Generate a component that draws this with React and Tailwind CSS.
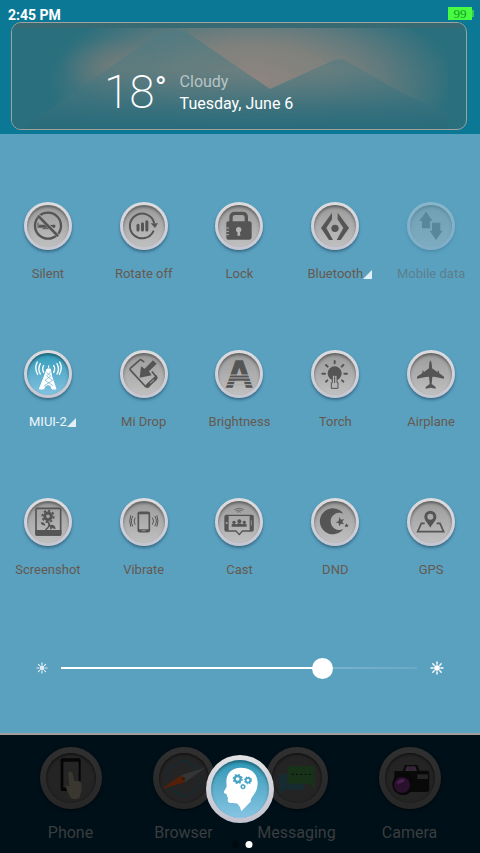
import React, { useState } from "react";

const FONT = "font-['Roboto','Noto_Sans',sans-serif]";
const INK = "#555555";

const line = (width, color = INK) => ({
  fill: "none",
  stroke: color,
  strokeWidth: width,
  strokeLinecap: "round",
  strokeLinejoin: "round",
});

/* Glyphs are drawn on a grid three times finer than the 48px tile. */

const Silent = () => (
  <svg viewBox="73 37 144 144" className="size-full" aria-hidden="true">
    <path d="M117 105h26l16 1a5 5 0 1 1 0 7l-16 1h-26z" fill={INK} />
    <path d="M115 100v14M130 117h22" {...line(3)} />
    <circle cx="145" cy="108" r="39" {...line(7)} />
    <path d="M118 80l55 56" {...line(11, "#a9a9a9")} />
    <path d="M117 80l56 57" {...line(8)} />
  </svg>
);

const Rotate = () => (
  <svg viewBox="361 37 144 144" className="size-full" aria-hidden="true">
    <path d="M463 98a37 37 0 1 0-2 27" {...line(6)} />
    <path d="M453 101h22l-9 14z" fill={INK} />
    <path d="M415 107v14M428.500 102v19M441.500 96v25" {...line(9)} />
  </svg>
);

const Lock = () => (
  <svg viewBox="77 37 144 144" className="size-full" aria-hidden="true">
    <path d="M125 95v-12q0-12 12-12h22q12 0 12 12v12" {...line(10)} />
    <path d="M117 95h63q7 0 7 7v41q0 7-7 7h-63q-6 0-6-6v-43q0-6 6-6z" fill={INK} />
    <path d="M106 115h12M106 125h12M106 135h12" {...line(3, "#aaaaaa")} />
    <circle cx="148" cy="120" r="8" fill="#b4b4b4" />
    <path d="M145 122h6l2 16h-9z" fill="#b4b4b4" />
  </svg>
);

const Bluetooth = () => (
  <svg viewBox="364 37 144 144" className="size-full" aria-hidden="true">
    <path d="M427 69v20l-17 26 20 36h-12l-24-36zM444 69v20l17 26-20 36h12l25-36z" fill={INK} />
    <circle cx="436" cy="116" r="11" fill={INK} />
  </svg>
);

const Data = () => (
  <svg viewBox="652 37 144 144" className="size-full" aria-hidden="true">
    <path d="M709 66l20 28h-8v22h-24v-22h-8zM727 99h25v24h7l-20 28-19-28h7z" fill={INK} />
  </svg>
);

const Tower = () => (
  <svg viewBox="73 37 144 144" className="size-full" aria-hidden="true">
    <path d="M147 83v9M142 94h10l4 22 13 38h-12q-3-14-13-13t-12 13h-13l15-38z" fill="white" stroke="white" strokeWidth="3" />
    <path d="M141 105l12 10-17 13 24 16M153 103l-12 12 18 13-25 16" {...line(2, "#5caed0")} />
    <path d="M132 84q-6 9 0 20M122 78q-9 16 0 31M113 73q-10 18 1 37M162 84q6 9 0 20M172 78q9 16 0 31M180 73q10 18-1 37" {...line(4, "white")} />
  </svg>
);

const Drop = () => (
  <svg viewBox="361 37 144 144" className="size-full" aria-hidden="true">
    <path d="M432 72l-7-5q-3-2-6 1l-25 22q-5 4-1 8l43 47q4 5 9 1l24-21q4-4 1-7l-12-15" {...line(5)} />
    <path d="M438 141l32-29 4 7-27 31q-4 2-9-3z" fill={INK} />
    <path d="M452 136l10-9" {...line(3, "#b5b5b5")} />
    <path d="M460 68l11 10-23 23 8 12-36 7 4-34 11 7z" fill={INK} />
  </svg>
);

const Brightness = () => (
  <svg viewBox="77 37 144 144" className="size-full" aria-hidden="true">
    <text x="150" y="149" textAnchor="middle" fontSize="112" fontWeight="700" fontFamily="Liberation Sans, Arial, sans-serif" fill={INK} stroke={INK} strokeWidth="4">A</text>
    <path d="M104 112h92M104 121h92M104 131h92M104 141h92" {...line(3, "#b0b0b0")} />
  </svg>
);

const Torch = () => (
  <svg viewBox="364 37 144 144" className="size-full" aria-hidden="true">
    <circle cx="435" cy="107" r="21" fill={INK} />
    <path d="M435 70v7M409 82l5 5M398 108h8M409 132l4-4M461 82l-5 5M464 108h8M461 132l-4-4" {...line(6)} />
    <path d="M428 113h14v22h3v17h-20v-17h3z" fill="#b5b5b5" stroke={INK} strokeWidth="3" />
    <path d="M435 117v18" {...line(3)} />
  </svg>
);

const Airplane = () => (
  <svg viewBox="652 37 144 144" className="size-full" aria-hidden="true">
    <path d="M722 68q5 5 5 24l17 12v-5h4v7l15 11v6l-25-5-10-1-2 22 12 9v5l-15-3-15 3v-5l12-9-2-22-10 1-26 5v-6l16-11v-7h4v5l16-12q0-19 4-24z" fill={INK} />
  </svg>
);

const Screenshot = () => (
  <svg viewBox="73 37 144 144" className="size-full" aria-hidden="true">
    <rect x="109" y="68" width="74" height="80" rx="4" {...line(5)} />
    <path d="M107 133h78v13q0 4-4 4h-70q-4 0-4-4z" fill={INK} />
    <circle cx="145" cy="92" r="10" {...line(9)} />
    <circle cx="145" cy="92" r="17" {...line(6)} strokeDasharray="7 6" strokeLinecap="butt" />
    <path d="M147 110q5 12-8 21M149 119q6 2 5 10" {...line(5)} />
    <path d="M123 110q12-2 14 10-12 0-14-10zM151 118q15-3 17 12-13 0-17-12z" fill={INK} />
  </svg>
);

const Vibrate = () => (
  <svg viewBox="361 37 144 144" className="size-full" aria-hidden="true">
    <rect x="416" y="80" width="33" height="58" rx="5" {...line(5)} />
    <path d="M417 83h31M417 134h31" {...line(6)} />
    <path d="M427 135h10" {...line(2, "#b0b0b0")} />
    <path d="M406 97q-6 9 0 19M399 92q-9 14 0 29M393 90q-6 15 0 32M459 97q6 9 0 19M466 92q9 14 0 29M472 90q6 15 0 32" {...line(3)} />
  </svg>
);

const Cast = () => (
  <svg viewBox="77 37 144 144" className="size-full" aria-hidden="true">
    <path d="M111 89h76q4 0 4 4v39q0 4-4 4h-28l-9 11-10-11h-29q-4 0-4-4v-39q0-4 4-4z" {...line(4)} />
    <path d="M107 89h11v46h-11zM181 89h11v46h-11z" fill={INK} />
    <circle cx="112" cy="112" r="3" fill="#aaaaaa" />
    <path d="M186 105v14" {...line(2, "#aaaaaa")} />
    <circle cx="134" cy="110" r="5" fill={INK} />
    <circle cx="150" cy="107" r="6" fill={INK} />
    <circle cx="165" cy="110" r="5" fill={INK} />
    <path d="M127 123v-7q7-4 14 0 9-7 18 0 7-4 13 0v7z" fill={INK} />
    <path d="M136 71q13-8 26 0M140 75q9-5 18 0M144 79q5-3 9 0" {...line(2)} />
  </svg>
);

const Moon = () => (
  <svg viewBox="364 37 144 144" className="size-full" aria-hidden="true">
    <path d="M461 84A39 39 0 1 0 461 130A26 26 0 1 1 461 84z" fill={INK} />
    <path d="M449 94l5 8 9-2-5 8 5 8-9-2-5 8-2-9-9-3 9-4zM471 113l2 4 4 1-3 3v4l-4-2-4 1 1-4-2-3h4z" fill={INK} />
  </svg>
);

const Gps = () => (
  <svg viewBox="652 37 144 144" className="size-full" aria-hidden="true">
    <path d="M722 75a18 18 0 0 1 18 18c0 12-11 19-18 33-7-14-18-21-18-33a18 18 0 0 1 18-18zm0 9a9 9 0 1 0 0 18 9 9 0 0 0 0-18z" fill={INK} fillRule="evenodd" />
    <path d="M705 113h-10l-11 25h78l-11-25h-10" {...line(5)} strokeLinecap="butt" strokeLinejoin="miter" />
  </svg>
);

const TILES = [
  { label: "Silent", Icon: Silent },
  { label: "Rotate off", Icon: Rotate },
  { label: "Lock", Icon: Lock },
  { label: "Bluetooth", Icon: Bluetooth, more: true },
  { label: "Mobile data", Icon: Data, disabled: true },
  { label: "MIUI-2", Icon: Tower, more: true, on: true },
  { label: "Mi Drop", Icon: Drop },
  { label: "Brightness", Icon: Brightness },
  { label: "Torch", Icon: Torch },
  { label: "Airplane", Icon: Airplane },
  { label: "Screenshot", Icon: Screenshot },
  { label: "Vibrate", Icon: Vibrate },
  { label: "Cast", Icon: Cast },
  { label: "DND", Icon: Moon },
  { label: "GPS", Icon: Gps },
];

function Tile({ label, Icon, on, more, disabled }) {
  const face = on
    ? "bg-linear-to-b from-[#2d9dbb] to-[#82c1e0]"
    : "bg-linear-to-b from-[#9b9b9b] to-[#c0c0c0]";
  return (
    <button type="button" disabled={disabled} className="flex flex-col items-center">
      <span className={`grid size-12 rounded-full bg-linear-to-b from-[#dddddf] to-[#c6c6d2] shadow-[0_2px_3px_rgba(20,50,70,0.5)] ${disabled ? "opacity-35" : ""}`}>
        <span className={`col-start-1 row-start-1 m-[3px] rounded-full shadow-[inset_0_2px_3px_rgba(0,0,0,0.4)] ${face}`} />
        <span className="col-start-1 row-start-1">
          <Icon />
        </span>
      </span>
      <span className={`mt-[14px] flex items-center text-[13px] leading-5 whitespace-nowrap ${on ? "text-[#eef6fa]" : disabled ? "text-[#5c7f8d]" : "text-[#65594f]"}`}>
        {label}
        {more && (
          <span className="w-0">
            <svg viewBox="0 0 9 9" className="size-[9px] max-w-none" aria-hidden="true">
              <path d="M9 0v9H0z" fill="#e2eff5" />
            </svg>
          </span>
        )}
      </span>
    </button>
  );
}

const Sun = ({ className }) => (
  <svg viewBox="0 0 40 40" className={className} aria-hidden="true">
    <circle cx="20" cy="20" r="8" fill="white" />
    <path d="M20 3v6M20 31v6M3 20h6M31 20h6M8 8l4 4M28 28l4 4M8 32l4-4M28 12l4-4" {...line(4, "white")} />
  </svg>
);

const PhoneArt = () => (
  <svg viewBox="119 64 186 186" className="size-full" aria-hidden="true">
    <rect x="181" y="98" width="60" height="98" rx="5" fill="#050505" />
    <rect x="189" y="108" width="46" height="78" fill="#252525" />
    <path d="M204 140q6-6 12 1l6 25 18 1q5 9 3 30l-6 20q-13 6-26 0l-12-25q-4-13 0-14l8 5z" fill="#39372f" />
  </svg>
);

const BrowserArt = () => (
  <svg viewBox="457 64 186 186" className="size-full" aria-hidden="true">
    <circle cx="550" cy="158" r="50" fill="none" stroke="#152b32" strokeWidth="5" strokeDasharray="60 18" />
    <path d="M550 96l-10 14h20zM550 218l-10-12h20z" fill="#152b32" />
    <path d="M482 191l60-43 11 22z" fill="#561f08" />
    <path d="M542 148l75-23-64 45z" fill="#333536" />
    <circle cx="548" cy="159" r="5" fill="#3c190b" />
  </svg>
);

const MessagingArt = () => (
  <svg viewBox="77 64 186 186" className="size-full" aria-hidden="true">
    <path d="M116 145h76v47h-58l-17 17z" fill="#162c31" />
    <path d="M142 121h81v70l-14-17h-67z" fill="#18321a" />
    <path d="M154 146h58" stroke="#0c100c" strokeWidth="4" strokeDasharray="6 7" />
  </svg>
);

const CameraArt = () => (
  <svg viewBox="415 64 186 186" className="size-full" aria-hidden="true">
    <path d="M462 136h25l5-18h38l7 17h22q7 0 7 7v48q0 9-9 9h-86q-10 0-10-10v-45q0-8 1-8z" fill="#090909" />
    <path d="M498 122h26l5 14h-36z" fill="#2d2d2d" />
    <path d="M505 124h11v9h-11z" fill="#43154a" />
    <path d="M530 146h32v14h-32z" fill="#252525" />
    <circle cx="487" cy="176" r="32" fill="#080808" />
    <circle cx="484" cy="178" r="24" fill="#29102c" />
    <path d="M467 174a18 18 0 0 1 26-12q-4 12-26 12z" fill="#472050" />
  </svg>
);

const DOCK = [
  { label: "Phone", Art: PhoneArt },
  { label: "Browser", Art: BrowserArt },
  { label: "Messaging", Art: MessagingArt },
  { label: "Camera", Art: CameraArt },
];

const Gear = ({ x, y, r }) => (
  <g transform={`translate(${x} ${y})`}>
    <circle r={r} {...line(r * 0.8, "#4aa5c4")} />
    <circle r={r * 1.45} fill="none" stroke="#4aa5c4" strokeWidth={r * 0.5} strokeDasharray={`${r * 0.57} ${r * 0.57}`} />
  </g>
);

const MindArt = () => (
  <svg viewBox="0 0 204 204" className="size-full" aria-hidden="true">
    <path d="M104 38c32 0 51 19 51 47 0 22-11 33-19 45q-3 5-1 9l-29 30q-3-15-11-23-6-3-20-2-10 0-10-9l1-7-3-4-1-6q-9-3-9-7l9-16q0-6-1-14c0-27 17-43 43-43z" fill="white" />
    <Gear x={95} y={72} r={9} />
    <Gear x={126} y={76} r={7} />
    <Gear x={111} y={95} r={5} />
  </svg>
);

export default function App() {
  const [level, setLevel] = useState(75);
  return (
    <main className={`flex min-h-screen w-full flex-col bg-[#5aa1c0] ${FONT}`}>
      <header className="bg-[#0b7896] pb-1">
        <div className="flex h-[22px] items-center justify-between pt-1 pr-[6px] pl-2">
          <time className="pt-1 text-sm leading-4 font-bold text-white">2:45 PM</time>
          <div className="flex items-center" aria-label="Battery 99 percent">
            <span className="flex h-[13px] w-6 items-center justify-center bg-[#47fa42] font-['Liberation_Serif',serif] text-[13px] leading-[13px] text-[#159a20]">99</span>
            <span className="h-[7px] w-[2px] bg-[#31c954]" />
          </div>
        </div>
        <section className="mr-[13px] ml-[11px] grid h-[108px] overflow-hidden rounded-[10px] border border-[#a3a19b] bg-[#296f7d]" aria-label="Weather">
          <svg viewBox="0 0 454 106" preserveAspectRatio="none" className="col-start-1 row-start-1 h-[106px] w-full" aria-hidden="true">
            <defs>
              <radialGradient id="glow" gradientUnits="userSpaceOnUse" cx="0" cy="0" r="1" gradientTransform="translate(240 58) scale(205 90)">
                <stop offset="0" stopColor="#8e8580" />
                <stop offset="0.4" stopColor="#7f817d" />
                <stop offset="0.65" stopColor="#607a7d" />
                <stop offset="1" stopColor="#296f7d" />
              </radialGradient>
              <radialGradient id="dawn" gradientUnits="userSpaceOnUse" cx="0" cy="0" r="1" gradientTransform="translate(102 44) scale(52 30)">
                <stop offset="0" stopColor="#8a7f78" stopOpacity="0.5" />
                <stop offset="1" stopColor="#8a7f78" stopOpacity="0" />
              </radialGradient>
              <linearGradient id="peak" gradientUnits="userSpaceOnUse" x1="0" y1="8" x2="0" y2="106">
                <stop offset="0" stopColor="#4d7b82" stopOpacity="0.7" />
                <stop offset="0.4" stopColor="#4f7a80" stopOpacity="0.55" />
                <stop offset="0.8" stopColor="#336f7c" stopOpacity="0.9" />
                <stop offset="1" stopColor="#286c7c" />
              </linearGradient>
            </defs>
            <rect y="5" width="436" height="101" fill="url(#glow)" />
            <rect y="5" width="200" height="80" fill="url(#dawn)" />
            <path d="M20 98L148 10q10-4 25-2L258 66l64-29q6-2 12 1l60 34 42 17v17H10z" fill="url(#peak)" />
            <rect width="454" height="5" fill="#386a73" />
          </svg>
          <div className="z-10 col-start-1 row-start-1 flex items-start pt-[46px] pl-[92px] text-white">
            <span className="text-[46px] leading-[46px] font-extralight">18</span>
            <span className="text-[32px] leading-[38px]">°</span>
            <div className="ml-[13px] text-base leading-[22px]">
              <p className="pt-[2px] text-[#b9c4c6]">Cloudy</p>
              <p>Tuesday, June 6</p>
            </div>
          </div>
        </section>
      </header>

      <section className="border-b-2 border-[#a29e99] pt-[68px] pb-[54px]" aria-label="Quick settings">
        <div className="grid grid-cols-5 gap-y-[66px] pr-px">
          {TILES.map((tile) => (
            <Tile key={tile.label} {...tile} />
          ))}
        </div>
        <div className="mt-[77px] flex items-center px-9">
          <Sun className="size-3 opacity-80" />
          <input
            type="range"
            min="0"
            max="100"
            value={level}
            onChange={(e) => setLevel(Number(e.target.value))}
            aria-label="Screen brightness"
            className="mx-[13px] h-[22px] min-w-0 flex-1 appearance-none bg-[length:100%_2px] bg-center bg-no-repeat [&::-webkit-slider-thumb]:size-[21px] [&::-webkit-slider-thumb]:appearance-none [&::-webkit-slider-thumb]:rounded-full [&::-webkit-slider-thumb]:bg-white"
            style={{ backgroundImage: `linear-gradient(to right, white ${level}%, #7ab3cd ${level}%, #6baac7 100%)` }}
          />
          <Sun className="size-[14px]" />
        </div>
      </section>

      <footer className="relative flex-1 bg-[#001018] px-[14px] pt-3 pb-2">
        <nav className="grid grid-cols-4" aria-label="Dock">
          {DOCK.map(({ label, Art }) => (
            <button key={label} type="button" className="flex flex-col items-center">
              <span className="grid size-[62px] rounded-full bg-linear-to-b from-[#303030] to-[#272728] shadow-[0_1px_3px_rgba(0,0,0,0.6)]">
                <span className="col-start-1 row-start-1 m-[6px] rounded-full bg-[#242424] shadow-[inset_0_1px_3px_rgba(0,0,0,0.7)]" />
                <span className="col-start-1 row-start-1">
                  <Art />
                </span>
              </span>
              <span className="mt-3 text-base leading-6 text-[#3a3d3f]">{label}</span>
            </button>
          ))}
        </nav>
        <button
          type="button"
          aria-label="Assistant"
          className="absolute top-5 left-1/2 grid size-[68px] -translate-x-1/2 rounded-full bg-linear-to-b from-[#e3e3e6] to-[#c2c2cf]"
        >
          <span className="col-start-1 row-start-1 m-[5px] rounded-full bg-linear-to-b from-[#2997b5] to-[#86c5e3] shadow-[inset_0_2px_3px_rgba(0,0,0,0.35)]" />
          <span className="col-start-1 row-start-1">
            <MindArt />
          </span>
        </button>
        <div className="absolute bottom-[5px] left-1/2 flex -translate-x-1/2 gap-[7px] pl-1" aria-hidden="true">
          <span className="size-[7px] rounded-full bg-[#00090e]" />
          <span className="size-[7px] rounded-full bg-white" />
        </div>
      </footer>
    </main>
  );
}
